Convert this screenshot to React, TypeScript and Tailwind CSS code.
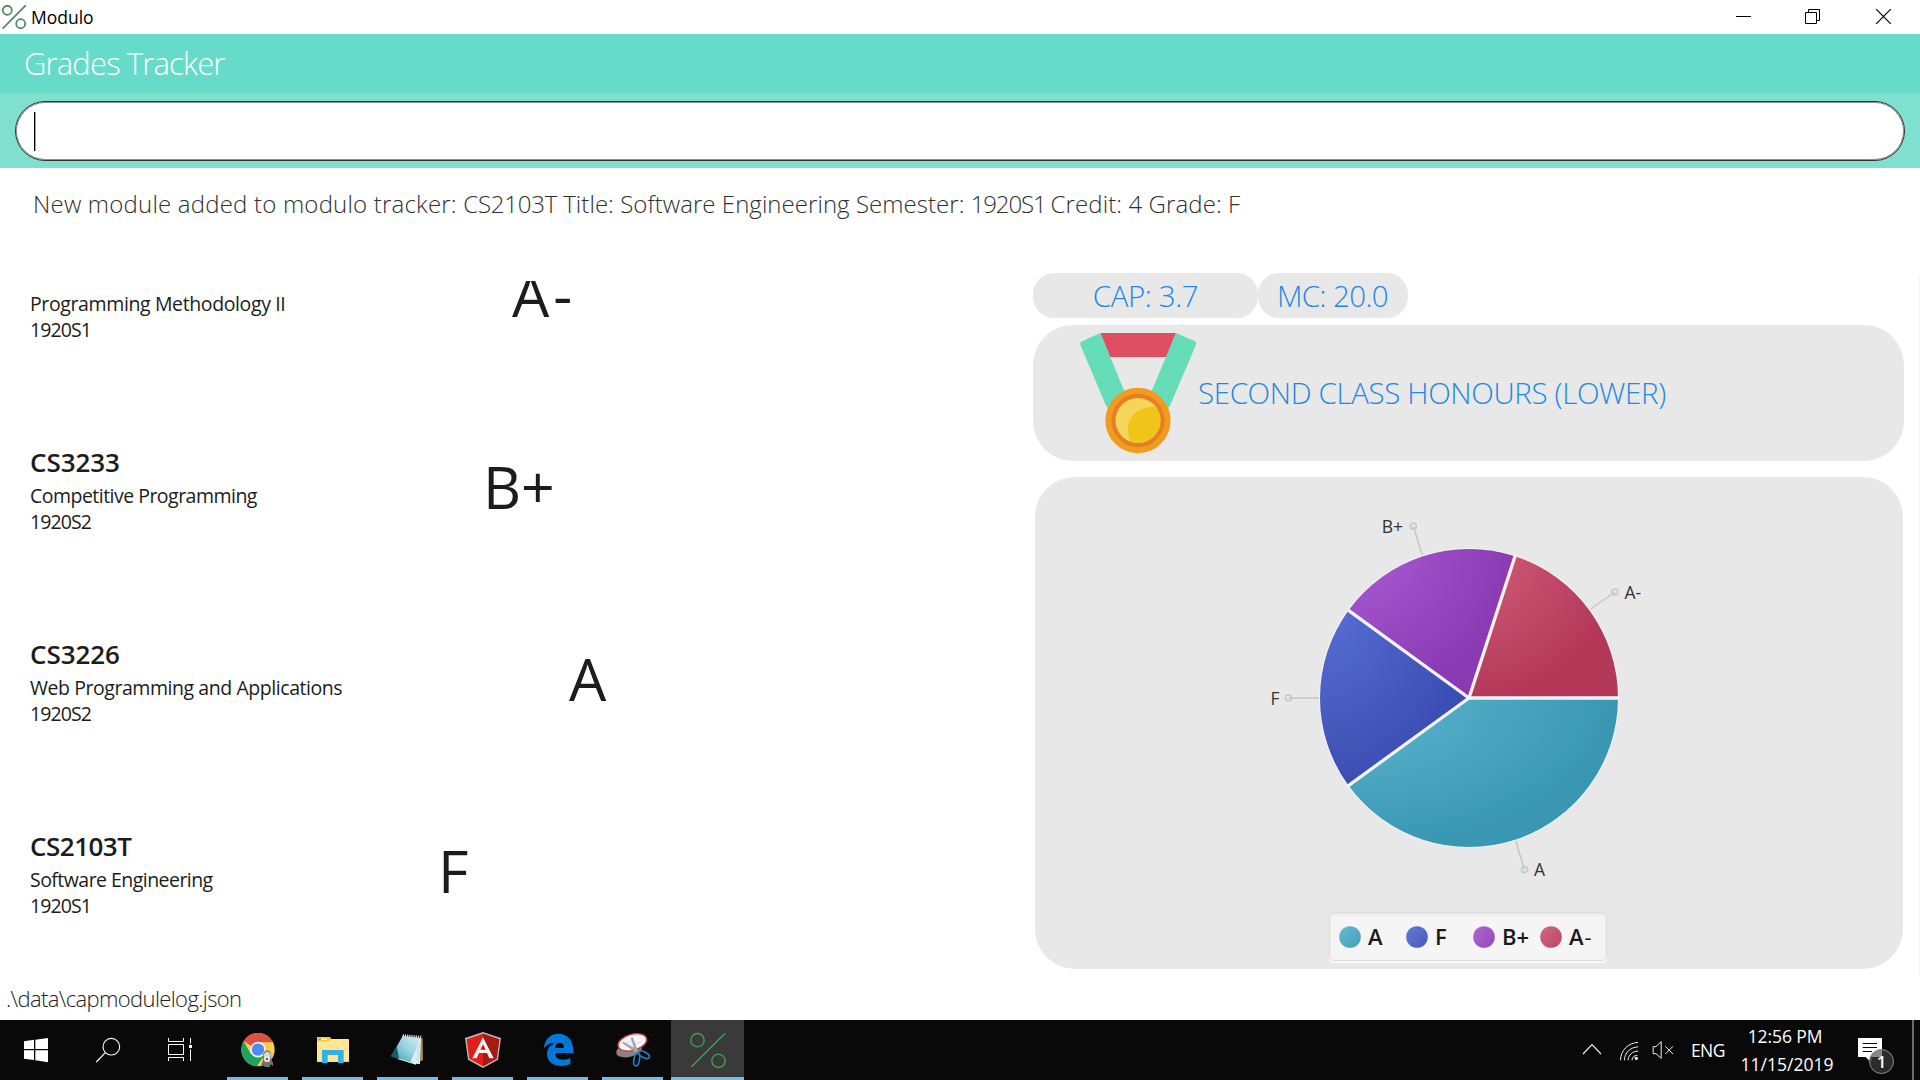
import type { ReactNode } from 'react';

type Grade = 'A' | 'F' | 'B+' | 'A-';

const modules: {
  code?: string;
  codeClass?: string;
  title: string;
  titleClass: string;
  sem: string;
  grade: Grade;
  gradeClass: string;
}[] = [
  { title: 'Programming Methodology II', titleClass: 'w-[255px] tracking-[-0.38px]', sem: '1920S1', grade: 'A-', gradeClass: 'ml-[227px] tracking-[4px]' },
  { code: 'CS3233', codeClass: 'tracking-[-0.05px]', title: 'Competitive Programming', titleClass: 'w-[227px] tracking-[-0.52px]', sem: '1920S2', grade: 'B+', gradeClass: 'ml-[226px]' },
  { code: 'CS3226', codeClass: 'tracking-[-0.05px]', title: 'Web Programming and Applications', titleClass: 'w-[312px] tracking-[-0.44px]', sem: '1920S2', grade: 'A', gradeClass: 'ml-[227px]' },
  { code: 'CS2103T', codeClass: 'tracking-[-0.5px]', title: 'Software Engineering', titleClass: 'w-[183px] tracking-[-0.54px]', sem: '1920S1', grade: 'F', gradeClass: 'ml-[225px]' },
];

const slices: { id: string; name: Grade; start: number; end: number; light: string; dark: string }[] = [
  { id: 'sa', name: 'A', start: 0, end: 144, light: '#5cb6d0', dark: '#3a97b4' },
  { id: 'sf', name: 'F', start: 144, end: 216, light: '#596fd3', dark: '#3b4eb3' },
  { id: 'sb', name: 'B+', start: 216, end: 288, light: '#ab5dd5', dark: '#8a3ab2' },
  { id: 'sm', name: 'A-', start: 288, end: 360, light: '#d25d7b', dark: '#b43958' },
];

const CX = 434;
const CY = 221;
const R = 149;

function arc(start: number, end: number) {
  const p = (a: number) =>
    `${(CX + R * Math.cos((a * Math.PI) / 180)).toFixed(2)} ${(CY + R * Math.sin((a * Math.PI) / 180)).toFixed(2)}`;
  return `M${CX} ${CY}L${p(start)}A${R} ${R} 0 0 1 ${p(end)}Z`;
}

const callouts = [
  { label: 'B+', x1: 387.3, y1: 77.7, x2: 378.3, y2: 49.3, tx: 368, ty: 55.7, anchor: 'end' },
  { label: 'A-', x1: 555.7, y1: 132, x2: 580, y2: 115, tx: 589.5, ty: 121.7, anchor: 'start' },
  { label: 'F', x1: 284, y1: 221, x2: 253.5, y2: 221, tx: 244.5, ty: 228, anchor: 'end' },
  { label: 'A', x1: 480.7, y1: 364, x2: 489.5, y2: 392.5, tx: 499, ty: 399, anchor: 'start' },
] as const;

function PercentLogo({ className, stroke, width }: { className: string; stroke: string; width: number }) {
  return (
    <svg className={className} viewBox="0 0 24 24" fill="none" stroke={stroke} strokeWidth={width}>
      <circle cx="5.3" cy="5.3" r="4.5" />
      <circle cx="18.7" cy="18.7" r="4.5" />
      <path d="M23.6 .4.6 23.6" />
    </svg>
  );
}

function TitleBar() {
  return (
    <div className="flex h-[34px] shrink-0 items-center bg-white">
      <PercentLogo className="ml-[2px] size-6" stroke="#4f8560" width={1.7} />
      <span className="ml-[5px] text-[17.5px] leading-8 text-black">Modulo</span>
      <div className="ml-auto flex h-full items-center text-black">
        <svg className="h-[34px] w-[71px]" viewBox="0 0 71 34" fill="none" stroke="currentColor">
          <path d="M29 16.5h15" />
        </svg>
        <svg className="h-[34px] w-[71px]" viewBox="0 0 71 34" fill="none" stroke="currentColor">
          <path d="M27.500 12.5h11v11h-11zM30.500 12V9.500h11v11H39" />
        </svg>
        <svg className="h-[34px] w-[71px]" viewBox="0 0 71 34" fill="none" stroke="currentColor" strokeWidth="1.200">
          <path d="M27.200 9.200l14.600 14.600M41.800 9.200L27.200 23.800" />
        </svg>
      </div>
    </div>
  );
}

function Medal() {
  return (
    <svg className="h-[136px] w-[120px] shrink-0" viewBox="54 15 360 408">
      <path d="M121 39H348L319 111H150Z" fill="#df4f61" />
      <path d="M121 39 192 211 178 262H140L61 74Q59 68 63 65Z" fill="#66ddb9" />
      <path d="M348 39 276 211 290 262H328L408 74Q410 68 405 64Z" fill="#66ddb9" />
      <circle cx="234" cy="301.500" r="98" fill="#f29c1f" />
      <circle cx="234" cy="301.500" r="80" fill="#e57e25" />
      <circle cx="234" cy="301.500" r="67.500" fill="#f3d55b" />
      <path d="M289 262C240 256 204 286 204 328Q204 346 212 365A67.500 67.500 0 0 0 289 262Z" fill="#f0c419" />
    </svg>
  );
}

function ModuleList() {
  return (
    <div className="mt-[53px] h-[702px] w-[1000px] overflow-hidden">
      <div className="-mt-[39px]">
        {modules.map((m) => (
          <div key={m.title} className="flex h-[192px] pl-[30px] text-[#1c1c1c]">
            <div className="pt-[10px]">
              <div className="h-[39px] text-[26px] font-semibold leading-9">
                <span className={m.codeClass}>{m.code}</span>
              </div>
              <div className="whitespace-nowrap text-[19.5px] leading-[26px]">
                <div className={m.titleClass}>{m.title}</div>
              </div>
              <div className="text-[19.5px] leading-[26px] tracking-[-0.9px]">{m.sem}</div>
            </div>
            <div className="pt-[22px] text-[59px] leading-[61px]">
              <div className={m.gradeClass}>{m.grade}</div>
            </div>
          </div>
        ))}
      </div>
    </div>
  );
}

function GradePie() {
  return (
    <svg className="h-[435px] w-[868px] shrink-0" viewBox="0 0 868 435">
      <defs>
        {slices.map((s) => (
          <radialGradient key={s.id} id={s.id} cx="0" cy="0" r="1">
            <stop offset="0" stopColor={s.light} />
            <stop offset="1" stopColor={s.dark} />
          </radialGradient>
        ))}
      </defs>
      <circle cx={CX} cy={CY} r={R + 1} fill="#f4f4f4" />
      {slices.map((s) => (
        <path key={s.id} d={arc(s.start, s.end)} fill={`url(#${s.id})`} />
      ))}
      {slices.map((s) => (
        <path
          key={s.id}
          d={`M${CX} ${CY}L${CX + R * Math.cos((s.start * Math.PI) / 180)} ${CY + R * Math.sin((s.start * Math.PI) / 180)}`}
          stroke="#f4f4f6"
          strokeWidth="3.300"
          strokeLinecap="round"
        />
      ))}
      {callouts.map((c) => (
        <g key={c.label}>
          <path d={`M${c.x1} ${c.y1}L${c.x2} ${c.y2}`} stroke="#c6c6c6" strokeWidth="1.500" />
          <circle cx={c.x2} cy={c.y2} r="3" fill="none" stroke="#c6c6c6" strokeWidth="1.500" />
          <text x={c.tx} y={c.ty} textAnchor={c.anchor} fontSize="17.500" fill="#333">
            {c.label}
          </text>
        </g>
      ))}
    </svg>
  );
}

function Legend() {
  return (
    <div className="mr-[2px] flex h-[49px] w-[278px] shrink-0 self-center rounded-[5px] border border-[#dcdcdc] bg-[#f5f5f5] pl-[9px] shadow-[0_2px_0_#fafafa,inset_0_2px_3px_#e9e9e9]">
      {slices.map((s) => (
        <div key={s.id} className="flex w-[67px] shrink-0 items-center">
          <svg className="size-[22px] shrink-0" viewBox="0 0 22 22">
            <defs>
              <linearGradient id={`${s.id}-dot`} x1="0" y1="0" x2="1" y2="1">
                <stop offset="0" stopColor={s.light} />
                <stop offset="1" stopColor={s.dark} />
              </linearGradient>
            </defs>
            <circle cx="11" cy="11" r="10.800" fill={`url(#${s.id}-dot)`} opacity=".93" />
          </svg>
          <span className="ml-[7px] text-[22px] font-semibold leading-[47px] tracking-[-0.1px] text-[#1a1a1a]">
            {s.name[0]}
            <span className={s.name === 'A-' ? 'ml-px font-normal' : ''}>{s.name.slice(1)}</span>
          </span>
        </div>
      ))}
    </div>
  );
}

function AppIcon({ cx, children }: { cx: number; children: ReactNode }) {
  return (
    <svg className="h-[60px] w-[60px] shrink-0" viewBox={`${cx - 90} 30 180 180`} fill="none">
      {children}
    </svg>
  );
}

function TaskbarApp({ active, children }: { active?: boolean; children: ReactNode }) {
  return (
    <div className="flex w-[75px] justify-center">
      <div
        className={
          active
            ? 'flex w-[73px] justify-center border-b-[3px] border-[#76b9ed] bg-[#3a3a3a]'
            : 'flex w-[61px] justify-center border-b-[3px] border-[#76b9ed]'
        }
      >
        {children}
      </div>
    </div>
  );
}

function Taskbar() {
  return (
    <div className="flex h-[60px] shrink-0 overflow-hidden bg-[#090909] text-[17.5px] text-white">
      <div className="flex w-[220px] shrink-0 *:mx-[6px]">
        <AppIcon cx={108}>
          <path d="M72 94 102 89.500V117H72ZM106 89 144 84V117H106ZM72 121H102V150L72 146ZM106 121H144V156.500L106 151Z" fill="#fff" />
        </AppIcon>
        <AppIcon cx={324}>
          <circle cx="334" cy="110" r="25" stroke="#fff" strokeWidth="3.300" />
          <path d="M316 128 289 156" stroke="#fff" strokeWidth="3.500" />
        </AppIcon>
        <AppIcon cx={540}>
          <path d="M505.500 84V94.500H550.500V84M505.500 153V142.500H550.500V153M505.500 103.500H550.500V133.500H505.500ZM571.500 84V101M571.500 118V153" stroke="#fff" strokeWidth="3" />
          <path d="M567 105h9v9h-9z" fill="#fff" />
        </AppIcon>
      </div>

      <TaskbarApp>
        <AppIcon cx={771}>
          <circle cx="771" cy="119" r="50" fill="#ffcd46" />
          <path d="M727.700 94A50 50 0 0 1 816 97L771 97V119Z" fill="#dd5144" />
          <path d="M727.700 94A50 50 0 0 0 768 169L792.700 131.500 771 119 749.300 131.500Z" fill="#1da260" />
          <circle cx="771" cy="119" r="23.500" fill="#f1f1f1" />
          <circle cx="771" cy="119" r="18.500" fill="#4c8bf5" />
          <path d="M781 171C779 158 787 155 786 146 784 132 789 122 798 121 808 122 813 132 810 146 812 155 819 156 816 168L809 163 806 171H792L787 165Z" fill="#77736a" />
          <path d="M788 134Q798 116 809 133L806 155H791Z" fill="#d8d6d0" />
          <circle cx="798" cy="147" r="8" fill="#f4f3ef" />
          <circle cx="798" cy="147" r="4" fill="#68655f" />
        </AppIcon>
      </TaskbarApp>
      <TaskbarApp>
        <AppIcon cx={996}>
          <path d="M948 82Q948 81 950 81H986L991 87H1042Q1044 87 1044 90V156H948Z" fill="#ffe694" />
          <path d="M948 82Q948 81 950 81H986Q990 83 991 88L986 94H948Z" fill="#f9c73b" />
          <path d="M954 88h24" stroke="#fff" strokeWidth="4" />
          <path d="M954 88h6" stroke="#3cab6a" strokeWidth="4" />
          <path d="M963 120H1028V160H1011V135H980V160H963Z" fill="#33b1e6" />
          <path d="M948 155h15M1028 155h16" stroke="#e5b44a" strokeWidth="2" />
        </AppIcon>
      </TaskbarApp>
      <TaskbarApp>
        <AppIcon cx={1221}>
          <defs>
            <linearGradient id="note" x1="0" y1="1" x2="1" y2="0">
              <stop offset="0" stopColor="#2f93ab" />
              <stop offset=".5" stopColor="#8fd0dd" />
              <stop offset="1" stopColor="#d9eff2" />
            </linearGradient>
          </defs>
          <path d="M1248 84 1265 85 1266 151 1252 155Z" fill="#a8864b" />
          <path d="M1260 82 1256 163 1224 157Z" fill="#c9dfe3" />
          <path d="M1204 78 1260 84 1245 164 1189 147Z" fill="#eef5f6" />
          <path d="M1204 80 1259 86 1236 159 1170 139Z" fill="url(#note)" />
          <path d="M1187 108 1170 139 1194 147Z" fill="#155a68" />
          <path d="M1259 88 1257 162 1228 156Z" fill="#dff0f2" />
          <path d="M1255 105 1247 150M1260 110 1252 155" stroke="#a9c9cf" strokeWidth="2" />
          <path d="M1205 77 1261 82" stroke="#c8cccc" strokeWidth="9" strokeDasharray="4 2.500" />
        </AppIcon>
      </TaskbarApp>
      <TaskbarApp>
        <AppIcon cx={246}>
          <path d="M246 66 300 84 291 149 246 174 201 149 192 84Z" fill="#b9b9b9" />
          <path d="M246 71 295 87.500 287 146 246 169 205 146 197 87.500Z" fill="#e11e18" />
          <path d="M246 71 295 87.500 287 146 246 169Z" fill="#a51a14" />
          <path d="M246 82 278 145H265L258 129H234L227 145H214ZM246 103 238 119H254Z" fill="#f3f3f3" fillRule="evenodd" />
        </AppIcon>
      </TaskbarApp>
      <TaskbarApp>
        <AppIcon cx={471}>
          <path
            d="M428 115C432 86 449 71 472 71 499 71 516 91 516 116V129H462C463 143 472 149 485 149 494 149 502 147 508 143V162C500 166 491 168 480 168 453 168 437 152 438 130 439 115 448 106 459 101 451 97 439 103 428 115ZM462 114H489C489 103 484 98 476 98 467 98 463 105 462 114Z"
            fill="#0078d7"
            fillRule="evenodd"
          />
        </AppIcon>
      </TaskbarApp>
      <TaskbarApp>
        <AppIcon cx={696}>
          <ellipse cx="684" cy="121" rx="39" ry="20" transform="rotate(-12 684 121)" fill="#858585" />
          <path d="M648 126Q645 136 652 140" stroke="#b8292c" strokeWidth="2" />
          <ellipse cx="694" cy="97" rx="44" ry="24" transform="rotate(-16 694 97)" fill="#f5f5f7" stroke="#d9363b" strokeWidth="4" />
          <path d="M666 102 698 92M700 103 722 95" stroke="#d2d2d6" strokeWidth="2" />
          <path d="M689 83 695 82 711 124 703 127ZM663 99 668 95 712 121 706 128Z" fill="#a2a6ac" />
          <ellipse cx="729" cy="134" rx="18" ry="8.500" transform="rotate(28 729 134)" stroke="#1f7fbe" strokeWidth="5" />
          <ellipse cx="707" cy="149" rx="8.500" ry="19" transform="rotate(10 707 149)" stroke="#1f7fbe" strokeWidth="5" />
        </AppIcon>
      </TaskbarApp>
      <TaskbarApp active>
        <AppIcon cx={922.5}>
          <g stroke="#3fa353" strokeWidth="4">
            <circle cx="891" cy="90.500" r="20" />
            <circle cx="954" cy="152.500" r="20" />
            <path d="M974 70 872 171" />
          </g>
        </AppIcon>
      </TaskbarApp>

      <div className="ml-auto flex items-center">
        <svg className="h-[60px] w-[96px]" viewBox="66 30 288 180" fill="none" stroke="#f0f0f0" strokeWidth="3.500">
          <path d="M69 132 96 104 123 132" />
          <g strokeWidth="3">
            <path d="M181.500 151C182 121 205 98 234 97.500" />
            <path d="M193 151C194 129 210 112 234 110.500M204 151C205 135 217 124 234 123M216 151Q217 137 232 136" />
            <circle cx="229" cy="145" r="5" fill="#fff" stroke="none" />
            <path d="M279.500 110H288L303.500 95V145L288 131H279.500ZM316 109 339 132M339 109 316 132" />
          </g>
        </svg>
        <span className="ml-[13px] w-[48px] leading-[60px] tracking-[-0.6px]">ENG</span>
        <div className="flex w-[96px] flex-col items-center whitespace-nowrap leading-[28px]">
          <span className="mr-[4px] tracking-[-0.1px]">12:56 PM</span>
          <span>11/15/2019</span>
        </div>
        <svg className="ml-[21px] h-[60px] w-[40px]" viewBox="888 30 120 180" fill="none">
          <path d="M894 84H966V141H936V160L917 141H894Z" fill="#fff" />
          <path d="M908 100.500H951M908 112.500H951M908 124.500H936" stroke="#0a0a0a" strokeWidth="3" />
          <circle cx="964.500" cy="154.500" r="36" fill="#2f2f2f" fillOpacity=".92" stroke="#8c8c8c" strokeWidth="3" />
          <path d="M933 141A34 34 0 0 1 966 120V141Z" fill="#8a8a8a" />
          <text x="964.500" y="173" textAnchor="middle" fontSize="50" fontWeight="600" fill="#fff">
            1
          </text>
        </svg>
        <div className="ml-[16px] mr-[6px] h-[60px] w-[2px] bg-[#6b6b6b]" />
      </div>
    </div>
  );
}

export default function App() {
  return (
    <div className="flex h-[1080px] w-[1920px] flex-col overflow-hidden bg-white font-['Open_Sans','Noto_Sans',sans-serif]">
      <TitleBar />
      <header className="flex h-[59px] shrink-0 items-center bg-[#66dbc9] pb-px pl-[24px]">
        <h1 className="text-[31px] font-light leading-[58px] tracking-[-0.85px] text-white">Grades Tracker</h1>
      </header>
      <div className="h-[75px] shrink-0 bg-[#80e0cf] px-[15px] pt-[8px]">
        <div className="flex h-[60px] items-center rounded-full border border-[#333] bg-white pl-[18px] shadow-[inset_0_0_0_1px_#8f8f8f]">
          <div className="h-[39px] w-[2px] border-r border-[#a0a0a0] bg-black" />
        </div>
      </div>
      <p className="mt-[20px] h-[40px] shrink-0 whitespace-nowrap pl-[33px] text-[24px] font-light leading-[32px] text-[#303030]">
        <span className="tracking-[0.2px]">New module added to modulo tracker: </span>
        <span className="tracking-[-0.2px]">CS2103T </span>
        <span className="tracking-[0.05px]">Title: Software Engineering Semester: </span>
        <span className="tracking-[-1.15px]">1920S1 </span>
        <span className="tracking-[0.1px]">Credit: 4 Grade: F</span>
      </p>
      <main className="flex h-[755px] shrink-0">
        <ModuleList />
        <section className="ml-[33px] mt-[45px] flex w-[871px] flex-col text-[29.5px] font-light text-[#1e88e5]">
          <div className="flex h-[45px] shrink-0 leading-[45px]">
            <div className="w-[225px] rounded-[21px] bg-[#e8e8e8] text-center tracking-[-0.4px]">CAP: 3.7</div>
            <div className="w-[150px] rounded-[21px] bg-[#e8e8e8] pr-px text-center tracking-[-0.6px]">MC: 20.0</div>
          </div>
          <div className="mt-[7px] flex h-[136px] shrink-0 items-center rounded-[40px] bg-[#e8e8e8] pl-[45px]">
            <Medal />
            <span className="pt-px tracking-[-0.36px]">SECOND CLASS HONOURS (LOWER)</span>
          </div>
          <div className="ml-[2px] mt-[16px] flex h-[492px] w-[868px] shrink-0 flex-col rounded-[40px] bg-[#e8e8e8] font-normal">
            <GradePie />
            <Legend />
          </div>
        </section>
        <div className="ml-auto mt-[46px] h-[702px] w-px bg-[#f4f4f4]" />
      </main>
      <footer className="h-[37px] shrink-0 pl-[6px] text-[22px] font-light leading-[30px] tracking-[-0.62px] text-[#222]">
        .\data\capmodulelog.json
      </footer>
      <Taskbar />
    </div>
  );
}
